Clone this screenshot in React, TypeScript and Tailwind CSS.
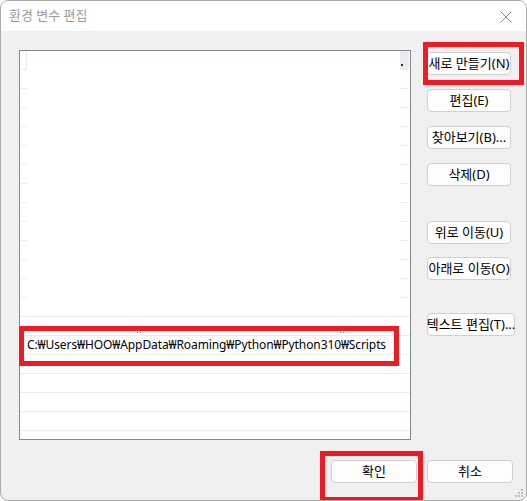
import React from 'react';

const font = {
  fontFamily: '"Segoe UI", "Noto Sans", "Noto Sans CJK KR", sans-serif',
};

function Btn({ label, className = '' }: { label: string; className?: string }) {
  return (
    <div
      className={`h-[23px] flex items-center justify-center rounded-[4px] border border-[#d0d0d0] bg-[#fdfdfd] text-[13px] leading-none text-black whitespace-nowrap ${className}`}
    >
      {label}
    </div>
  );
}

const rows = Array.from({ length: 20 }, (_, i) => i);

function ListBox() {
  return (
    <div className="w-[392px] h-[390px] border border-[#828790] bg-white flex flex-col">
      {rows.map((i) => {
        if (i === 15) {
          return (
            <div key={i} className="h-[19px] flex items-center pl-[7px] border-b border-[#f0f0f0]">
              <span className="text-[12px] leading-none text-black tracking-[-0.1px]">
                C:₩Users₩HOO₩AppData₩Roaming₩Python₩Python310₩Scripts
              </span>
            </div>
          );
        }
        if (i >= 13) {
          return (
            <div key={i} className="h-[19px] relative border-b border-[#ececec]">
              {i === 14 && (
                <>
                  <span className="absolute left-[117px] top-[15px] w-[1px] h-[1px] bg-[#777]" />
                  <span className="absolute left-[120px] top-[15px] w-[1px] h-[1px] bg-[#777]" />
                  <span className="absolute left-[320px] top-[15px] w-[1px] h-[1px] bg-[#777]" />
                  <span className="absolute left-[323px] top-[15px] w-[1px] h-[1px] bg-[#777]" />
                </>
              )}
            </div>
          );
        }
        return (
          <div key={i} className="h-[19px] flex">
            <div
              className={`w-[6px] ml-[1px] border-b border-[#ececec] ${i === 0 ? 'border-r' : ''}`}
            />
            <div className="flex-1" />
            <div
              className={`w-[9px] mr-[1px] border-b border-[#ececec] relative ${i === 0 ? 'bg-[#ebebeb]' : ''}`}
            >
              {i === 0 && (
                <span className="absolute left-[1px] top-[13px] w-[2px] h-[2px] bg-[#333]" />
              )}
            </div>
          </div>
        );
      })}
    </div>
  );
}

export default function App() {
  return (
    <div
      className="w-[527px] h-[501px] relative bg-[#f0f0f0] border border-[#a9a9a9] rounded-[8px] overflow-hidden flex flex-col"
      style={font}
    >
      <div className="h-[30px] bg-white flex items-center justify-between pl-[8px] pr-[14px]">
        <span className="text-[13px] text-[#9b9b9b]">환경 변수 편집</span>
        <svg width="12" height="12" viewBox="0 0 12 12" className="mt-[1px]">
          <path d="M0.5 0.5 L11.5 11.5 M11.5 0.5 L0.5 11.5" stroke="#8a8a8a" strokeWidth="1" />
        </svg>
      </div>

      <div className="flex-1 flex flex-col">
        <div className="flex pt-[19px] pl-[18px]">
          <ListBox />
          <div className="ml-[16px] flex flex-col w-[84px]">
            <Btn label="새로 만들기(N)" className="mt-[2px]" />
            <Btn label="편집(E)" className="mt-[14px]" />
            <Btn label="찾아보기(B)..." className="mt-[14px]" />
            <Btn label="삭제(D)" className="mt-[14px]" />
            <Btn label="위로 이동(U)" className="mt-[35px]" />
            <Btn label="아래로 이동(O)" className="mt-[13px]" />
            <Btn label="텍스트 편집(T)..." className="mt-[33px] w-[88px]" />
          </div>
        </div>

        <div className="flex justify-end gap-[10px] pr-[13px] mt-[20px]">
          <Btn label="확인" className="w-[86px]" />
          <Btn label="취소" className="w-[86px]" />
        </div>
      </div>

      {/* red annotation boxes */}
      <div className="absolute left-[422px] top-[41px] w-[101px] h-[43px] border-[5px] border-[#ed1c24]" />
      <div className="absolute left-[18px] top-[325px] w-[380px] h-[40px] border-[5px] border-[#ed1c24]" />
      <div className="absolute left-[319px] top-[450px] w-[103px] h-[51px] border-[5px] border-[#ed1c24]" />

      {/* resize grip */}
      <div className="absolute right-[3px] bottom-[3px] grid grid-cols-3 gap-[1px]">
        {[0, 0, 1, 0, 1, 1, 1, 1, 1].map((v, k) => (
          <span key={k} className={`w-[2px] h-[2px] ${v ? 'bg-[#bdbdbd]' : ''}`} />
        ))}
      </div>
    </div>
  );
}
